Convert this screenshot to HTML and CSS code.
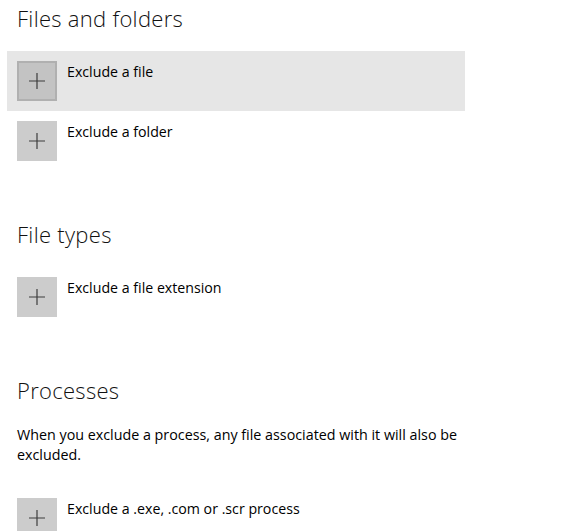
FILE: index.html
```html
<!DOCTYPE html>
<html>
<head>
<meta charset="utf-8">
<link rel="stylesheet" href="styles.css">
</head>
<body>
<main class="page">
  <section class="group first">
    <h2 class="title">Files and folders</h2>
    <div class="item hover">
      <span class="plus"><svg width="18" height="18" viewBox="0 0 18 18"><path d="M9 1V17M1 9H17" stroke="#3c3c3c" stroke-width="1.2" fill="none"/></svg></span>
      <span class="label">Exclude a file</span>
    </div>
    <div class="item">
      <span class="plus"><svg width="18" height="18" viewBox="0 0 18 18"><path d="M9 1V17M1 9H17" stroke="#3c3c3c" stroke-width="1.2" fill="none"/></svg></span>
      <span class="label">Exclude a folder</span>
    </div>
  </section>
  <section class="group">
    <h2 class="title">File types</h2>
    <div class="item">
      <span class="plus"><svg width="18" height="18" viewBox="0 0 18 18"><path d="M9 1V17M1 9H17" stroke="#3c3c3c" stroke-width="1.2" fill="none"/></svg></span>
      <span class="label">Exclude a file extension</span>
    </div>
  </section>
  <section class="group">
    <h2 class="title">Processes</h2>
    <p class="desc">When you exclude a process, any file associated with it will also be excluded.</p>
    <div class="item">
      <span class="plus"><svg width="18" height="18" viewBox="0 0 18 18"><path d="M9 1V17M1 9H17" stroke="#3c3c3c" stroke-width="1.2" fill="none"/></svg></span>
      <span class="label">Exclude a .exe, .com or .scr process</span>
    </div>
  </section>
</main>
</body>
</html>
```
FILE: styles.css
```css
html, body {
  margin: 0;
  padding: 0;
  background: #ffffff;
  overflow: hidden;
}
body {
  font-family: "Open Sans", "Noto Sans", sans-serif;
  color: #000000;
}
.page {
  padding: 0 0 0 7px;
  width: 458px;
}
.group {
  margin-top: 45px;
}
.group.first {
  margin-top: 0;
}
.title {
  margin: 0 0 0 10px;
  font-weight: 300;
  font-size: 22px;
  letter-spacing: 0.3px;
  line-height: 36px;
  height: 36px;
  padding-bottom: 15px;
  color: #111;
}
.desc {
  margin: 2px 0 0 10px;
  font-size: 14.3px;
  line-height: 20px;
  width: 448px;
  padding-bottom: 23px;
}
.item {
  display: flex;
  align-items: flex-start;
  gap: 10px;
  height: 40px;
  padding: 10px;
}
.item.hover {
  background: #e6e6e6;
}
.plus {
  width: 40px;
  height: 40px;
  box-sizing: border-box;
  background: #cccccc;
  display: flex;
  align-items: center;
  justify-content: center;
  flex: none;
}
.hover .plus {
  background: #c3c3c3;
  border: 2px solid #b0b0b0;
}
.label {
  font-size: 14.2px;
  line-height: 20px;
  margin-top: 1px;
}
```
